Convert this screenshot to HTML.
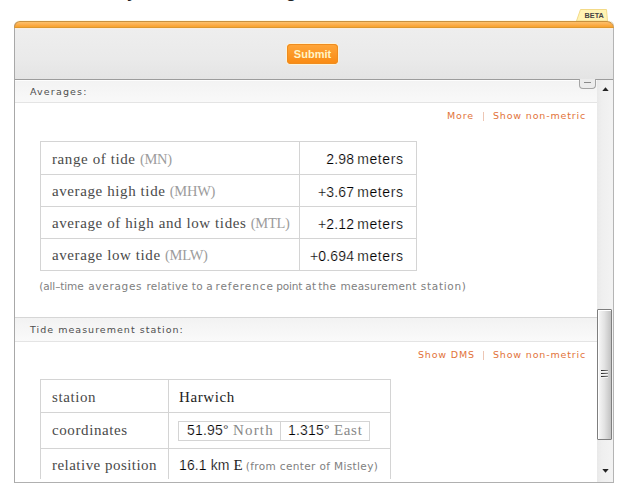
<!DOCTYPE html>
<html><head><meta charset="utf-8">
<style>
html,body{margin:0;padding:0;background:#fff;}
body{width:628px;height:484px;position:relative;overflow:hidden;font-family:"DejaVu Sans","Liberation Sans",sans-serif;}
.abs{position:absolute;}
.top{top:-17px;font:bold 17px "Liberation Sans",sans-serif;color:#222;white-space:pre;}
#panel{left:14px;top:21px;width:598px;height:461px;border-left:1px solid #a8a8a8;border-right:1px solid #b4b4b4;border-bottom:1px solid #b0b0b0;border-radius:5px 5px 0 0;background:#fff;overflow:hidden;}
#obar{left:14px;top:21px;width:598px;height:5px;border:1px solid #c8903e;border-left-color:#c29458;border-right-color:#d69a48;border-bottom-color:#de982e;border-radius:6px 7px 0 0;background:linear-gradient(#fdc268,#fcb458 35%,#faa638 80%,#f9a52e);box-shadow:0 -1px 0 #fffbea;}
#hdr{left:15px;top:28px;width:598px;height:51px;background:linear-gradient(#fbeee0 0,#fbeee0 1px,#eeeeee 1px,#eaeaea 60%,#e4e4e4 100%);}
#btn{left:287px;top:44px;width:51px;height:20px;border-radius:4px;background:linear-gradient(#ffa63a,#f98a12);box-shadow:inset 0 0 0 1px #f08c1e,0 0 0 1px rgba(255,244,214,.9);color:#fff4c8;font:bold 11px "Liberation Sans",sans-serif;text-align:center;line-height:20px;}
#beta{left:576px;top:9px;width:32px;height:12px;}
.sh{left:15px;width:582px;height:22px;background:linear-gradient(#fdfdfd 0,#fdfdfd 1px,#f3f3f3 1px,#f9f9f9 100%);font-size:9.5px;letter-spacing:1.15px;color:#4e4e4e;}
.sh span{position:absolute;left:15px;top:6px;line-height:12px;white-space:nowrap;}
.links{font-size:9.5px;letter-spacing:.83px;color:#e2733a;white-space:nowrap;line-height:12px;}
.sepbar{width:1px;height:9px;background:#edc6b4;}
table{border-collapse:collapse;position:absolute;}
td{border:1px solid #d4d4d4;padding:0;white-space:nowrap;color:#333;}
.s{font-family:"Liberation Serif",serif;font-size:15px;letter-spacing:.6px;color:#4a4a4a;-webkit-text-stroke:0;}
.g{color:#9c9c9c;font-size:14.5px;letter-spacing:-.3px;}
.n{font-family:"Liberation Sans",sans-serif;font-size:14px;letter-spacing:.2px;color:#000;-webkit-text-stroke:.2px #fff;}
.m{letter-spacing:.6px;margin-left:-1.2px;margin-right:-.6px}#t1 td{height:29px;padding-top:2px;}#t1 tr:first-child td{height:30px}
#t1 td.l{padding-left:11px;width:247px;}
#t1 td.r{text-align:right;padding-right:13px;width:103px;}
#note span{position:absolute;top:0}#note{left:40px;top:280px;font-size:10.5px;color:#808080;letter-spacing:.33px;white-space:nowrap;line-height:13px;}
#sb{left:597px;top:80px;width:16px;height:402px;background:linear-gradient(90deg,#e9e9e9,#efefef 30%,#f3f3f3);}
#thumb{left:597px;top:309px;width:13px;height:129px;border:1px solid #7e7e7e;border-radius:1px;background:linear-gradient(90deg,#f8f8f8,#e2e2e2 50%,#c2c2c2);box-shadow:inset 1px 1px 0 #fff;}
#ctab{left:579px;top:79px;width:15px;height:9px;border:1px solid #a4a4a4;border-top:none;border-radius:0 0 4px 4px;background:#ececec;}
</style></head><body>
<div class="abs top" style="left:127px">y</div><div class="abs top" style="left:286px">g</div>
<div class="abs" id="panel"></div>
<div class="abs" id="hdr"></div>
<div class="abs" id="obar"></div>
<svg class="abs" id="beta" viewBox="0 0 32 12"><path d="M0.5 12 L4.5 0.5 L30.5 0.5 L31.5 12 Z" fill="#fff3b4" stroke="#f3da88" stroke-width="1"/><text x="8.5" y="9.2" font-family="Liberation Sans, sans-serif" font-weight="bold" font-size="7.3" fill="#444">BETA</text></svg>
<div class="abs" id="btn">Submit</div>

<div class="abs" style="left:15px;top:79px;width:598px;height:1px;background:#9c9c9c"></div>
<div class="abs sh" style="top:80px"><span>Averages:</span></div>
<div class="abs" style="left:15px;top:102px;width:582px;height:1px;background:#e4e4e4"></div>
<div class="abs links" style="left:447px;top:110px">More</div>
<div class="abs sepbar" style="left:483px;top:112px"></div>
<div class="abs links" style="left:493px;top:110px">Show non-metric</div>

<table id="t1" style="left:40px;top:141px">
<tr><td class="l s">range of tide <span class="g">(MN)</span></td><td class="r n">2.98 <span class="m">meters</span></td></tr>
<tr><td class="l s">average high tide <span class="g">(MHW)</span></td><td class="r n">+3.67 <span class="m">meters</span></td></tr>
<tr><td class="l s">average of high and low tides <span class="g">(MTL)</span></td><td class="r n">+2.12 <span class="m">meters</span></td></tr>
<tr><td class="l s">average low tide <span class="g">(MLW)</span></td><td class="r n">+0.694 <span class="m">meters</span></td></tr>
</table>
<div class="abs" id="note"><span style="left:-0.8px;letter-spacing:-0.11px">(all–time</span> <span style="left:48.2px;letter-spacing:0.70px">averages</span> <span style="left:106.4px;letter-spacing:0.27px">relative</span> <span style="left:151.8px;letter-spacing:0.30px">to</span> <span style="left:166.2px;letter-spacing:0.30px">a</span> <span style="left:175.5px;letter-spacing:0.90px">reference</span> <span style="left:236.2px;letter-spacing:-0.15px">point</span> <span style="left:265.2px;letter-spacing:0.30px">at</span> <span style="left:278.3px;letter-spacing:0.20px">the</span> <span style="left:300.5px;letter-spacing:0.25px">measurement</span> <span style="left:380.8px;letter-spacing:0.70px">station)</span></div>

<div class="abs" style="left:15px;top:317px;width:582px;height:1px;background:#d6d6d6"></div>
<div class="abs sh" style="top:318px;height:23px;background:linear-gradient(#f2f2f2,#fafafa)"><span style="letter-spacing:1.02px">Tide measurement station:</span></div>
<div class="abs" style="left:15px;top:341px;width:582px;height:1px;background:#e4e4e4"></div>
<div class="abs links" style="left:418px;top:349px">Show DMS</div>
<div class="abs sepbar" style="left:483px;top:351px"></div>
<div class="abs links" style="left:493px;top:349px">Show non-metric</div>

<div class="abs" style="left:15px;top:370px;width:582px;height:109px;overflow:hidden">
<table id="t2" style="left:25px;top:9px">
<tr><td class="s" style="height:30px;padding-top:2px;padding-left:11px;width:116px">station</td><td class="s" style="padding-top:2px;padding-left:10px;width:211px;color:#222">Harwich</td></tr>
<tr><td class="s" style="height:35px;padding-left:11px">coordinates</td><td style="padding-left:9px">
<table style="position:static"><tr><td class="n" style="height:17px;padding:0 6px 1px 8px">51.95° <span class="s g" style="font-size:15px;letter-spacing:1.2px;color:#888">North</span></td><td class="n" style="padding:0 6px 1px 7px">1.315° <span class="s g" style="font-size:15px;letter-spacing:.7px;color:#888">East</span></td></tr></table>
</td></tr>
<tr><td class="s" style="height:29px;padding-top:2px;padding-left:11px;letter-spacing:.47px">relative position</td><td class="n" style="padding-top:2px;padding-left:10px;letter-spacing:.1px">16.1 km <span class="s" style="color:#222;letter-spacing:0">E</span><span style="font-family:'DejaVu Sans',sans-serif;font-size:10.5px;color:#808080;letter-spacing:.37px;margin-left:3px;-webkit-text-stroke:0">(from center of Mistley)</span></td></tr>
</table>
</div>

<div class="abs" id="sb"></div>
<div class="abs" id="thumb"></div>
<svg class="abs" style="left:597px;top:80px" width="16" height="16"><path d="M5.3 11 L8.5 7.3 L11.7 11 Z" fill="#222"/></svg>
<svg class="abs" style="left:597px;top:463px" width="16" height="16"><path d="M5.3 6 L8.5 9.7 L11.7 6 Z" fill="#222"/></svg>
<svg class="abs" style="left:597px;top:365px" width="16" height="16"><defs><linearGradient id="gg" x1="0" x2="1" y1="0" y2="0"><stop offset="0" stop-color="#222"/><stop offset="1" stop-color="#8a8a8a"/></linearGradient></defs><rect x="4" y="5" width="7" height="1" fill="url(#gg)"/><rect x="4" y="8" width="7" height="1" fill="url(#gg)"/><rect x="4" y="11" width="7" height="1" fill="url(#gg)"/><rect x="4" y="6" width="7" height="1" fill="#f4f4f4"/><rect x="4" y="9" width="7" height="1" fill="#f4f4f4"/><rect x="4" y="12" width="7" height="1" fill="#f4f4f4"/></svg>
<div class="abs" id="ctab"></div>
<div class="abs" style="left:584px;top:82px;width:7px;height:1px;background:#8a8a8a"></div>
</body></html>
